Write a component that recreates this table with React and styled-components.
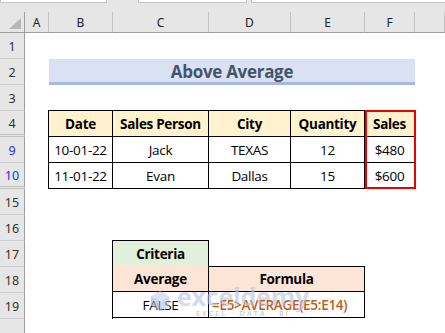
import React from 'react';
import styled, {createGlobalStyle} from 'styled-components';

const GlobalStyle = createGlobalStyle`
  html, body { margin: 0; padding: 0; background: #ffffff; }
  body { width: 445px; height: 333px; overflow: hidden; font-family: "Noto Sans", "Open Sans", sans-serif; }
`;

const Page = styled.div`
  width: 445px;
  height: 333px;
  overflow: hidden;
  background: #ffffff;
`;

const TopStrip = styled.div`
  height: 12px;
  background: #e6e6e6;
  display: flex;
  align-items: flex-start;
  gap: 4px;
`;

const Field = styled.div`
  height: 2px;
  width: ${p => p.w}px;
  margin-left: ${p => p.ml || 0}px;
  background: #ffffff;
  border: 1px solid #c6c6c6;
  border-top: none;
  flex-shrink: 0;
`;

const Sheet = styled.div`
  display: grid;
  grid-template-columns: 25px 24px 64px 96px 82px 74px 50px 1fr;
  grid-template-rows: 21px repeat(12, 26px);
  position: relative;
`;

const Corner = styled.div`
  background: #e6e6e6;
  border-right: 1px solid #9e9e9e;
  border-bottom: 1px solid #9e9e9e;
  display: flex;
  align-items: flex-end;
  justify-content: flex-end;
  padding: 0 3px 3px 0;
`;

const ColHead = styled.div`
  background: #e6e6e6;
  border-bottom: 1px solid #9e9e9e;
  border-right: 1px solid #c4c4c4;
  display: flex;
  align-items: center;
  justify-content: center;
  font-size: 12px;
  color: #222;
  padding-top: 1px;
`;

const RowHead = styled.div`
  grid-column: 1;
  background: #e6e6e6;
  border-right: 1px solid #9e9e9e;
  border-bottom: ${p => (p.hiddenBelow ? '3px double #c0c0c0' : '1px solid #cfcfcf')};
  display: flex;
  align-items: center;
  justify-content: center;
  font-size: 12.5px;
  color: ${p => (p.filtered ? '#2b2bff' : '#333')};
  padding-top: 1px;
`;

const Title = styled.div`
  grid-column: 3 / 8;
  grid-row: 3;
  background: #dae1f3;
  border-bottom: 3px solid #a6b9e0;
  display: flex;
  align-items: center;
  justify-content: center;
  font-family: "Open Sans", sans-serif;
  font-weight: 700;
  font-size: 17px;
  color: #44546a;
  letter-spacing: -0.3px;
  padding-top: 1px;
`;

const DataTable = styled.div`
  grid-column: 3 / 8;
  grid-row: 5 / 8;
  display: grid;
  grid-template-columns: 64px 96px 82px 74px 50px;
  grid-template-rows: repeat(3, 26px);
  border-left: 1px solid #000;
  border-top: 1px solid #000;
  margin: -1px 0 0 -1px;
  position: relative;
`;

const Cell = styled.div`
  border-right: 1px solid #000;
  border-bottom: 1px solid #000;
  background: ${p => p.bg || '#ffffff'};
  display: flex;
  align-items: center;
  justify-content: center;
  font-family: "Open Sans", sans-serif;
  font-size: 13.5px;
  font-weight: ${p => (p.bold ? 700 : 400)};
  color: ${p => p.color || '#000'};
  letter-spacing: -0.3px;
  white-space: nowrap;
  overflow: visible;
`;

const RedFrame = styled.div`
  position: absolute;
  top: -1px;
  right: -1px;
  width: 47px;
  height: 75px;
  border: 2.5px solid #ee0000;
  pointer-events: none;
`;

const CriteriaHead = styled(Cell)`
  grid-column: 4;
  grid-row: 10;
  border-left: 1px solid #000;
  border-top: 1px solid #000;
  margin: -1px 0 0 -1px;
`;

const FormulaTable = styled.div`
  grid-column: 4 / 7;
  grid-row: 11 / 13;
  display: grid;
  grid-template-columns: 96px 156px;
  grid-template-rows: repeat(2, 26px);
  margin: -1px 0 0 -1px;
  border-left: 1px solid #000;
`;

const FormulaHeadCell = styled(Cell)`
  grid-column: ${p => p.col};
  border-top: ${p => (p.top ? '1px solid #000' : 'none')};
`;

const FormulaText = styled(Cell)`
  justify-content: flex-start;
  padding-left: 3px;
  color: #c65911;
  font-weight: 600;
`;

const Watermark = styled.div`
  position: absolute;
  left: 150px;
  top: 272px;
  display: flex;
  align-items: center;
  gap: 7px;
  pointer-events: none;
  opacity: 0.6;
`;

const MarkText = styled.div`
  display: flex;
  flex-direction: column;
  align-items: center;
  line-height: 1;
`;

const MarkName = styled.span`
  font-family: "Open Sans", sans-serif;
  font-weight: 700;
  font-size: 25px;
  color: #b4c4e6;
  letter-spacing: -0.2px;
`;

const MarkTag = styled.span`
  font-family: "Open Sans", sans-serif;
  font-size: 7px;
  font-weight: 600;
  color: #a8a8a8;
  letter-spacing: 2.2px;
  margin-top: 1px;
`;

const columns = ['A', 'B', 'C', 'D', 'E', 'F', ''];
const rows = [
  {n: '1'}, {n: '2'}, {n: '3'}, {n: '4', hiddenBelow: true},
  {n: '9', filtered: true}, {n: '10', filtered: true, hiddenBelow: true},
  {n: '15'}, {n: '16'}, {n: '17'}, {n: '18'}, {n: '19'}, {n: ''},
];

const sales = [
  ['10-01-22', 'Jack', 'TEXAS', '12', '$480'],
  ['11-01-22', 'Evan', 'Dallas', '15', '$600'],
];

const App = () => {
  return (
    <Page>
      <GlobalStyle/>
      <TopStrip>
        <Field w={105}/>
        <Field w={107} ml={27}/>
        <Field w={200}/>
      </TopStrip>
      <Sheet>
        <Corner>
          <svg width="12" height="11" viewBox="0 0 12 11">
            <polygon points="12,0 12,11 0,11" fill="#b8b8b8"/>
          </svg>
        </Corner>
        {columns.map((c, i) => (
          <ColHead key={i}>{c}</ColHead>
        ))}
        {rows.map((r, i) => (
          <RowHead key={i} filtered={r.filtered} hiddenBelow={r.hiddenBelow}>{r.n}</RowHead>
        ))}

        <Title>Above Average</Title>

        <DataTable>
          {['Date', 'Sales Person', 'City', 'Quantity', 'Sales'].map(h => (
            <Cell key={h} bold bg="#fff2cc">{h}</Cell>
          ))}
          {sales.map(row => row.map((v, i) => (
            <Cell key={row[0] + i}>{v}</Cell>
          )))}
          <RedFrame/>
        </DataTable>

        <CriteriaHead bold bg="#e2efda">Criteria</CriteriaHead>
        <FormulaTable>
          <FormulaHeadCell col={1} bold bg="#fce4d6">Average</FormulaHeadCell>
          <FormulaHeadCell col={2} top bold bg="#fce4d6">Formula</FormulaHeadCell>
          <Cell>FALSE</Cell>
          <FormulaText>=E5&gt;AVERAGE(E5:E14)</FormulaText>
        </FormulaTable>

        <Watermark>
          <svg width="20" height="24" viewBox="0 0 22 24">
            <polygon points="11,1 21,6.5 11,12 1,6.5" fill="#c3cfea"/>
            <polygon points="1,6.5 11,12 11,23 1,17.5" fill="#9eb2dc"/>
            <polygon points="21,6.5 11,12 11,23 21,17.5" fill="#b3c2e4"/>
          </svg>
          <MarkText>
            <MarkName>exceldemy</MarkName>
            <MarkTag>EXCEL · DATA · BI</MarkTag>
          </MarkText>
        </Watermark>
      </Sheet>
    </Page>
  );
};

export default App;
